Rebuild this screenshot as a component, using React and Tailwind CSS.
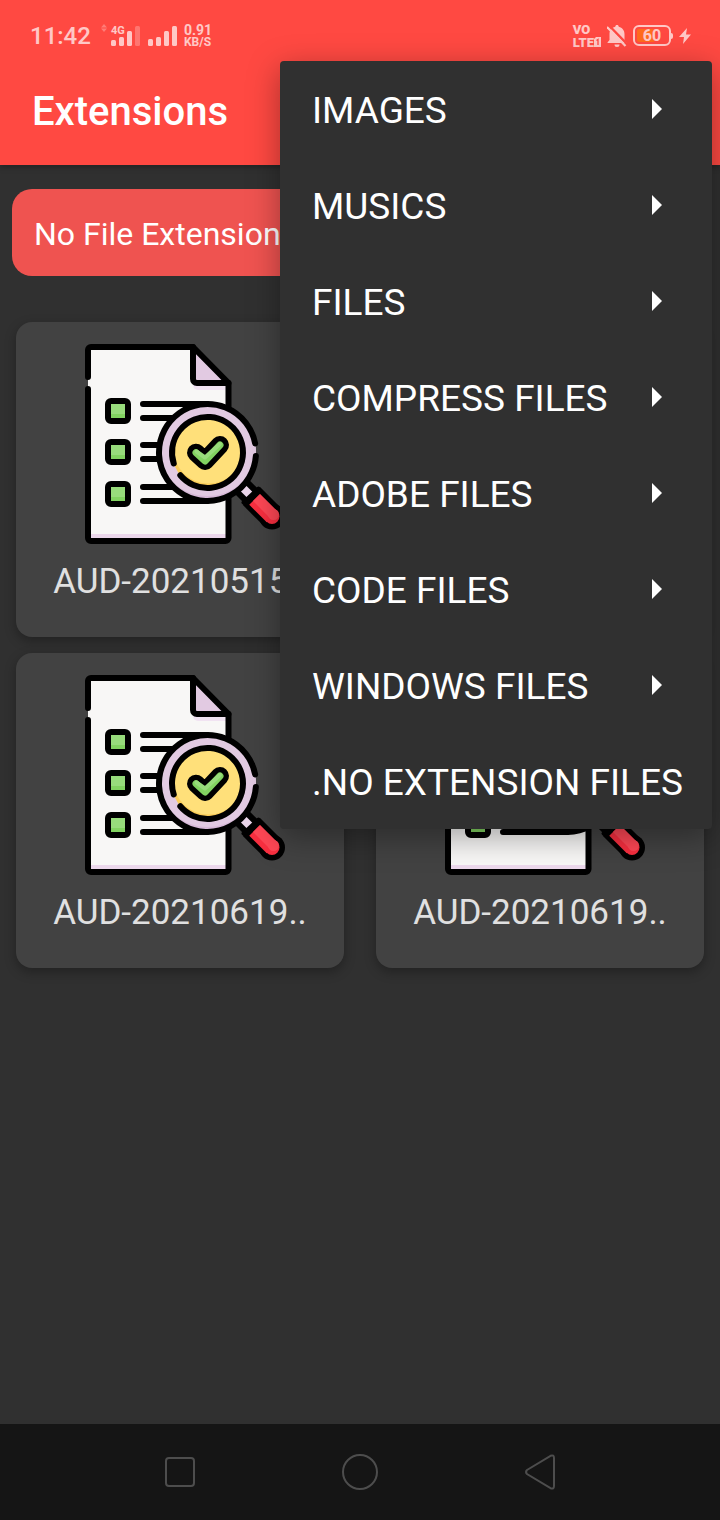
import React from "react";

const MENU = [
  { label: "IMAGES", sub: true },
  { label: "MUSICS", sub: true },
  { label: "FILES", sub: true },
  { label: "COMPRESS FILES", sub: true },
  { label: "ADOBE FILES", sub: true },
  { label: "CODE FILES", sub: true },
  { label: "WINDOWS FILES", sub: true },
  { label: ".NO EXTENSION FILES", sub: false },
];

const FILES = ["AUD-20210515..", "", "AUD-20210619..", "AUD-20210619.."];

function FileIcon() {
  return (
    <svg viewBox="-10 0 210 200" className="h-[200px] w-[210px]" fill="none" aria-hidden="true">
      <path d="M3 6a3 3 0 0 1 3-3H108L143.500 39V194a3 3 0 0 1-3 3H6a3 3 0 0 1-3-3Z" fill="#f8f7f6" />
      <path d="M3 190H143V197H3Z" fill="#ecd8ec" />
      <path d="M108 40H143V46H113a5 5 0 0 1-5-5Z" fill="#f1e3f2" />
      <path d="M108 3L143.500 39H112a4 4 0 0 1-4-4Z" fill="#e2cae2" />
      <g stroke="#000" strokeWidth="6" strokeLinecap="round" strokeLinejoin="round">
        <path d="M3 33V6a3 3 0 0 1 3-3H108L143.500 39V194a3 3 0 0 1-3 3H6a3 3 0 0 1-3-3V45" />
        <path d="M108 3V35a4 4 0 0 0 4 4H143.500" />
        <path d="M58 60H122M58 74H90M58 101H76M58 115H76M58 143H92M58 157H122" />
      </g>
      {[57, 98, 140].map((y) => (
        <g key={y}>
          <rect x="23" y={y} width="20" height="20" rx="3" fill="#98dc7c" />
          <rect x="25" y={y + 13} width="16" height="5" fill="#82d361" />
          <rect x="23" y={y} width="20" height="20" rx="3" stroke="#000" strokeWidth="6" />
        </g>
      ))}
      <path d="M152 138L170 156" stroke="#000" strokeWidth="20" />
      <path d="M157 143L165.500 151.500" stroke="#ead5ea" strokeWidth="8" />
      <circle cx="122.500" cy="108.500" r="48.500" fill="#d7b9d8" />
      <ellipse cx="122.500" cy="106" rx="48.500" ry="46" fill="#e2cae2" />
      <circle cx="122.500" cy="108.500" r="35.500" fill="#fbcd59" />
      <ellipse cx="123.500" cy="105.500" rx="35" ry="34" fill="#ffe07a" />
      <g stroke="#000" strokeWidth="6" strokeLinecap="round">
        <path d="M170.160 99.500A48.500 48.500 0 1 0 170.870 112" />
        <path d="M88.750 119.500A35.500 35.500 0 1 1 95.300 131.300" />
      </g>
      <g strokeLinecap="round" strokeLinejoin="round">
        <path d="M111 108.700L120 117L135 101" stroke="#000" strokeWidth="18" />
        <path d="M111 108.700L120 117L135 101" stroke="#82d361" strokeWidth="7" />
        <path d="M111.500 107.500L120 113.500L135 100" stroke="#98dc7c" strokeWidth="4" />
      </g>
      <circle cx="187" cy="172.500" r="13" fill="#000" />
      <path d="M166.500 152L187 172.500" stroke="#000" strokeWidth="25" />
      <path d="M158.500 158.500L173.500 144.500" stroke="#000" strokeWidth="4" strokeLinecap="round" />
      <circle cx="187" cy="172.500" r="7.500" fill="#f92f40" />
      <path d="M169.500 155.500L187 172.800" stroke="#f92f40" strokeWidth="15" />
      <path d="M171.500 153.500L188 170" stroke="#ff4755" strokeWidth="10" />
      <circle cx="188.500" cy="170.500" r="5.500" fill="#ff4755" />
    </svg>
  );
}

function Bars({ dim }) {
  const first = dim ? 14 : 13;
  return (
    <svg viewBox="0 0 30 20" className="h-5 w-[30px]" fill="#fff" aria-hidden="true">
      <rect x="0" y={first} width="5" height={20 - first} rx="1.500" />
      <rect x="8" y="11" width="5" height="9" rx="1.500" />
      <rect x="16" y="5" width="5" height="15" rx="1.500" />
      <rect x="24" y="0" width="5" height="20" rx="1.500" opacity={dim ? 0.35 : 1} />
    </svg>
  );
}

function StatusBar() {
  return (
    <div className="flex h-[53px] items-center justify-between pt-[18px] pr-[29px] pl-[30px] opacity-70">
      <div className="flex items-center">
        <span className="text-2xl font-medium">11:42</span>
        <svg viewBox="0 0 6 8" className="mb-4 ml-[10px] h-2 w-[6px] opacity-40" fill="#fff" aria-hidden="true">
          <path d="M0 3.500L3 0L6 3.500ZM0 4.500L3 8L6 4.500Z" />
        </svg>
        <div className="relative ml-1 flex">
          <Bars dim />
          <span className="absolute top-0 left-0 text-[11px] leading-[9px] font-bold">4G</span>
        </div>
        <div className="ml-[7px] flex">
          <Bars />
        </div>
        <div className="ml-[6px] font-bold">
          <div className="text-sm leading-3">0.91</div>
          <div className="text-xs leading-3">KB/S</div>
        </div>
      </div>
      <div className="flex items-center">
        <div className="text-[13px] leading-[13px] font-black">
          <div>VO</div>
          <div className="flex items-center">
            LTE
            <svg viewBox="0 0 7 10" className="h-[10px] w-[7px]" aria-hidden="true">
              <path d="M2 0H7V10H0V2Z" fill="#fff" />
              <path d="M2.500 3.500L4 2.500V8" stroke="#ff4942" strokeWidth="1.300" fill="none" />
            </svg>
          </div>
        </div>
        <svg viewBox="0 0 20 24" className="ml-[6px] h-6 w-5" aria-label="Notifications muted">
          <path d="M10 1c1 0 1.700.7 1.700 1.700C15.500 3.500 17.500 6.500 17.500 10v6l2 2.500v.5H.5v-.5l2-2.500v-6C2.500 6.500 4.500 3.500 8.300 2.700 8.300 1.700 9 1 10 1ZM7.500 20.500h5a2.500 2.500 0 0 1-5 0Z" fill="#fff" />
          <path d="M2 1.500L20 20" stroke="#ff4942" strokeWidth="2.500" />
          <path d="M0 3L18.500 22" stroke="#fff" strokeWidth="2.200" />
        </svg>
        <div className="ml-[6px] flex items-center">
          <div className="flex h-[21px] w-[38px] rounded-md border-2 border-white p-[2px]">
            <div className="relative flex w-full items-center justify-center text-base leading-none font-bold">
              <span className="absolute inset-y-0 left-0 w-[60%] rounded-xs bg-[#ff7a10]" />
              <span className="relative">60</span>
            </div>
          </div>
          <span className="h-[6px] w-[2px] rounded-r-full bg-white" />
        </div>
        <svg viewBox="0 0 12 16" className="ml-[6px] h-4 w-3" fill="#fff" aria-label="Charging">
          <path d="M8 0L0 9H5L4 16L12 6.500H7Z" />
        </svg>
      </div>
    </div>
  );
}

function FileCard({ name }) {
  return (
    <article className="flex h-[315px] flex-col items-center rounded-2xl bg-[#424242] pt-[22px] shadow-[0_4px_12px_rgba(0,0,0,0.3)]">
      <FileIcon />
      {name && <p className="mt-[17px] text-[35px] leading-[42px] text-[#e0e0e0]">{name}</p>}
    </article>
  );
}

export default function App() {
  return (
    <div className="relative flex min-h-screen flex-col bg-[#303030] font-['Roboto',sans-serif] text-white">
      <header className="bg-[#ff4942] shadow-[0_2px_6px_rgba(0,0,0,0.3)]">
        <StatusBar />
        <div className="flex h-28 items-center px-8 pt-[6px]">
          <h1 className="text-[40px] font-medium">Extensions</h1>
        </div>
      </header>

      <main className="flex-1">
        <div className="mx-3 mt-6 flex h-[87px] items-center rounded-[20px] bg-[#ef5350] px-[22px] pt-[2px] text-[32px]">
          No File Extension
        </div>
        <section className="mt-[46px] grid grid-cols-2 gap-x-8 gap-y-4 px-4 pb-8">
          {FILES.map((name, i) => (
            <FileCard key={i} name={name} />
          ))}
        </section>
      </main>

      <nav className="grid h-24 grid-cols-3 bg-[#151515] px-[12.5%]" aria-label="System">
        <button aria-label="Recents" className="flex items-center justify-center">
          <span className="size-[30px] rounded-[4px] border-2 border-[#4d4d4d]" />
        </button>
        <button aria-label="Home" className="flex items-center justify-center">
          <span className="size-9 rounded-full border-2 border-[#4d4d4d]" />
        </button>
        <button aria-label="Back" className="flex items-center justify-center">
          <svg viewBox="0 0 30 36" className="h-9 w-[30px]" fill="none" stroke="#4d4d4d" strokeWidth="2" aria-hidden="true">
            <path d="M2 16L25.500 1.800Q29 0.500 29 4V32Q29 35.500 25.500 34.200L2 20Q0 18 2 16Z" />
          </svg>
        </button>
      </nav>

      <div
        role="menu"
        className="absolute top-[61px] right-2 w-[432px] rounded-sm bg-[#303030] shadow-[0_8px_32px_rgba(0,0,0,0.35)]"
      >
        {MENU.map(({ label, sub }) => (
          <button
            key={label}
            role="menuitem"
            className="flex h-24 w-full items-center justify-between pr-[50px] pl-8 text-left text-[37px] whitespace-nowrap"
          >
            <span className="pt-[3px]">{label}</span>
            {sub && (
              <svg viewBox="0 0 10 20" className="h-5 w-[10px]" fill="#fff" aria-hidden="true">
                <path d="M0 0L10 10L0 20Z" />
              </svg>
            )}
          </button>
        ))}
      </div>
    </div>
  );
}
